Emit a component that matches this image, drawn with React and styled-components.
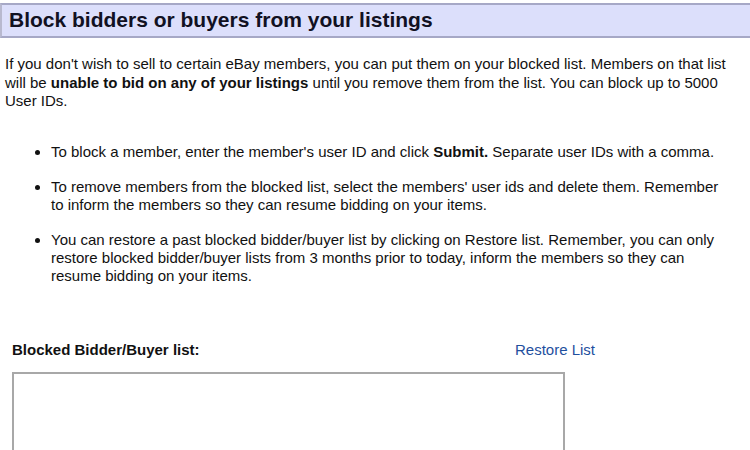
import React from 'react';
import styled, { createGlobalStyle } from 'styled-components';

const GlobalStyle = createGlobalStyle`
  body {
    margin: 0;
    background: #ffffff;
    font-family: "Liberation Sans", Arial, sans-serif;
    color: #111111;
  }
`;

const Page = styled.div`
  width: 750px;
  height: 450px;
  overflow: hidden;
  padding-top: 3px;
  box-sizing: border-box;
`;

const TitleBar = styled.div`
  background: #dcdffb;
  border-top: 2px solid #a6a8c6;
  border-bottom: 2px solid #a6a8c6;
  border-left: 2px solid #b8b9cf;
  padding: 4px 7px 5px;
`;

const Title = styled.h1`
  margin: 0;
  font-size: 21px;
  line-height: 22px;
  font-weight: bold;
  color: #111122;
`;

const Intro = styled.p`
  margin: 17px 0 0 5px;
  width: 738px;
  font-size: 15px;
  line-height: 18.5px;
`;

const Tips = styled.ul`
  margin: 32px 0 0;
  padding-left: 51px;
  width: 678px;
`;

const Tip = styled.li`
  font-size: 15px;
  line-height: 18px;
  margin-bottom: 17px;
`;

const ListHeader = styled.div`
  display: flex;
  align-items: baseline;
  width: 583px;
  margin: 56px 0 0 12px;
  justify-content: space-between;
`;

const Label = styled.span`
  font-size: 15px;
  font-weight: bold;
`;

const RestoreLink = styled.a`
  font-size: 15px;
  color: #1f4f9e;
  text-decoration: none;
  cursor: pointer;
`;

const ListBox = styled.textarea`
  display: block;
  margin: 14px 0 0 12px;
  width: 553px;
  height: 120px;
  border: 2px solid #a8a8a8;
  box-sizing: border-box;
  resize: none;
`;

export default function App() {
  return (
    <Page>
      <GlobalStyle />
      <TitleBar>
        <Title>Block bidders or buyers from your listings</Title>
      </TitleBar>
      <Intro>
        If you don't wish to sell to certain eBay members, you can put them on your blocked list. Members on that list
        will be <b>unable to bid on any of your listings</b> until you remove them from the list. You can block up to 5000
        User IDs.
      </Intro>
      <Tips>
        <Tip>
          To block a member, enter the member's user ID and click <b>Submit.</b> Separate user IDs with a comma.
        </Tip>
        <Tip>
          To remove members from the blocked list, select the members' user ids and delete them. Remember to inform the
          members so they can resume bidding on your items.
        </Tip>
        <Tip>
          You can restore a past blocked bidder/buyer list by clicking on Restore list. Remember, you can only restore
          blocked bidder/buyer lists from 3 months prior to today, inform the members so they can resume bidding on your
          items.
        </Tip>
      </Tips>
      <ListHeader>
        <Label>Blocked Bidder/Buyer list:</Label>
        <RestoreLink>Restore List</RestoreLink>
      </ListHeader>
      <ListBox />
    </Page>
  );
}
